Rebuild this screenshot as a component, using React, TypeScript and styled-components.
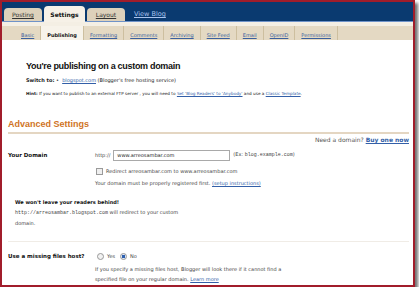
import styled, { createGlobalStyle } from "styled-components"

const GlobalStyle = createGlobalStyle`
  html, body {
    margin: 0;
    padding: 0;
    background: #ffffff;
  }
  body {
    font-family: "DejaVu Sans", Verdana, sans-serif;
    color: #222222;
  }
`

const topTabs = [
  { name: 'Posting', active: false },
  { name: 'Settings', active: true },
  { name: 'Layout', active: false },
]

const subTabs = [
  'Basic', 'Publishing', 'Formatting', 'Comments', 'Archiving',
  'Site Feed', 'Email', 'OpenID', 'Permissions',
]

const App = () => {
  return (
    <>
      <GlobalStyle />
      <Frame>
        <Header>
          {topTabs.map((t) => (
            <TopTab key={t.name} $active={t.active}>{t.name}</TopTab>
          ))}
          <ViewBlog>View Blog</ViewBlog>
        </Header>
        <SubBar>
          {subTabs.map((s) => (
            <SubTab key={s} $active={s === 'Publishing'}>{s}</SubTab>
          ))}
        </SubBar>

        <Intro>
          <Title>You're publishing on a custom domain</Title>
          <SwitchLine>
            <b>Switch to:</b> &bull;&nbsp; <Link>blogspot.com</Link> (Blogger's free hosting service)
          </SwitchLine>
          <Hint>
            <b>Hint:</b> If you want to publish to an external FTP server , you will need to <Link>Set 'Blog Readers' to 'Anybody'</Link> and use a <Link>Classic Template</Link>.
          </Hint>
        </Intro>

        <Section>
          <SectionTitle>Advanced Settings</SectionTitle>
          <NeedDomain>
            Need a domain? <BoldLink>Buy one now</BoldLink>
          </NeedDomain>

          <FormRow>
            <Label>Your Domain</Label>
            <Controls>
              <InputLine>
                <span>http://</span>
                <TextBox>www.arreosambar.com</TextBox>
                <span>(Ex: <Mono>blog.example.com</Mono>)</span>
              </InputLine>
              <CheckLine>
                <CheckBox />
                <span>Redirect arreosambar.com to www.arreosambar.com</span>
              </CheckLine>
              <Note>
                Your domain must be properly registered first. <Link>(setup instructions)</Link>
              </Note>
            </Controls>
          </FormRow>

          <Behind>
            <BehindTitle>We won't leave your readers behind!</BehindTitle>
            <BehindText>
              <Mono>http://arreosambar.blogspot.com</Mono> will redirect to your custom domain.
            </BehindText>
          </Behind>

          <Divider />

          <FormRow>
            <Label>Use a missing files host?</Label>
            <Controls>
              <RadioLine>
                <Radio />
                <span>Yes</span>
                <Radio $checked />
                <span>No</span>
              </RadioLine>
              <Help>
                If you specify a missing files host, Blogger will look there if it cannot find a specified file on your regular domain. <Link>Learn more</Link>
              </Help>
            </Controls>
          </FormRow>
        </Section>
      </Frame>
    </>
  )
}

export default App

const Frame = styled.div`
width: 411px;
height: 283px;
border: 2px solid #a11d2b;
box-shadow: 3px 3px 3px rgba(0, 0, 0, 0.55);
overflow: hidden;
display: flex;
flex-direction: column;
background: #ffffff;
`

const Header = styled.div`
height: 19px;
background: #0a3a70;
border-bottom: 1px solid #6f93c8;
display: flex;
align-items: flex-end;
padding-left: 2px;
gap: 2px;
`

const TopTab = styled.div<{ $active?: boolean }>`
height: ${p => p.$active ? '16px' : '13px'};
width: ${p => p.$active ? '41px' : '38px'};
background: ${p => p.$active ? '#f6f1e7' : '#ddd1bb'};
border-radius: 4px 4px 0 0;
font-size: 6px;
font-weight: ${p => p.$active ? 'bold' : 'normal'};
color: ${p => p.$active ? '#111111' : '#333333'};
text-decoration: ${p => p.$active ? 'none' : 'underline'};
display: flex;
align-items: center;
justify-content: center;
margin-bottom: ${p => p.$active ? '-1px' : '0'};
`

const ViewBlog = styled.div`
font-size: 6.5px;
color: #a9c4ee;
text-decoration: underline;
margin-left: 7px;
align-self: center;
padding-top: 5px;
`

const SubBar = styled.div`
height: 18px;
background: linear-gradient(#f4efe4 0, #f4efe4 4px, #e4d9c3 4px);
display: flex;
align-items: stretch;
padding-left: 13px;
`

const SubTab = styled.div<{ $active?: boolean }>`
display: flex;
align-items: center;
padding: 4px 6px 0;
margin-top: 4px;
font-size: 5px;
font-weight: ${p => p.$active ? 'bold' : 'normal'};
color: ${p => p.$active ? '#111111' : '#3a5f9e'};
text-decoration: ${p => p.$active ? 'none' : 'underline'};
background: ${p => p.$active ? '#f7f3ea' : 'transparent'};
border-right: 1px solid #cdbf9f;
`

const Intro = styled.div`
padding: 20px 0 0 24px;
display: flex;
flex-direction: column;
`

const Title = styled.div`
font-family: "Liberation Sans", Arial, sans-serif;
font-weight: bold;
font-size: 9px;
letter-spacing: -0.3px;
color: #111111;
line-height: 12px;
`

const SwitchLine = styled.div`
margin-top: 3px;
font-size: 5px;
line-height: 10px;
`

const Hint = styled.div`
margin-top: 5px;
font-size: 4.2px;
line-height: 8px;
`

const Link = styled.span`
color: #335fa8;
text-decoration: underline;
`

const BoldLink = styled(Link)`
font-weight: bold;
`

const Mono = styled.span`
font-family: "Liberation Mono", "Courier New", monospace;
line-height: 10px;
`

const Section = styled.div`
padding: 20px 4px 0 6px;
display: flex;
flex-direction: column;
`

const SectionTitle = styled.div`
font-family: "Liberation Sans", Arial, sans-serif;
font-weight: bold;
font-size: 9px;
color: #d0741f;
line-height: 12px;
padding-bottom: 2px;
border-bottom: 2px solid #e4d6c2;
`

const NeedDomain = styled.div`
align-self: flex-end;
font-size: 6px;
line-height: 10px;
color: #555555;
margin-top: 1px;
`

const FormRow = styled.div`
display: flex;
margin-top: 4px;
`

const Label = styled.div`
width: 87px;
flex-shrink: 0;
font-weight: bold;
font-size: 5.5px;
line-height: 12px;
color: #111111;
`

const Controls = styled.div`
display: flex;
flex-direction: column;
font-size: 5px;
color: #444444;
`

const InputLine = styled.div`
display: flex;
align-items: center;
gap: 3px;
height: 12px;
`

const TextBox = styled.div`
width: 117px;
height: 11px;
border: 1px solid #a9a9a9;
box-sizing: border-box;
padding-left: 3px;
display: flex;
align-items: center;
font-size: 5px;
color: #222222;
`

const CheckLine = styled.div`
display: flex;
align-items: center;
gap: 3px;
margin-top: 6px;
line-height: 8px;
`

const CheckBox = styled.div`
width: 5px;
height: 5px;
border: 1px solid #9a9a9a;
background: #efefef;
margin-left: 1px;
`

const Note = styled.div`
margin-top: 4px;
line-height: 8px;
`

const Behind = styled.div`
padding-left: 7px;
margin-top: 10px;
font-size: 5px;
color: #111111;
display: flex;
flex-direction: column;
`

const BehindTitle = styled.div`
font-weight: bold;
line-height: 10px;
`

const BehindText = styled.div`
width: 185px;
line-height: 10px;
color: #444444;
`

const Divider = styled.div`
height: 1px;
background: #f0ece6;
margin: 13px 0 4px;
`

const RadioLine = styled.div`
display: flex;
align-items: center;
gap: 3px;
height: 12px;
`

const Radio = styled.div<{ $checked?: boolean }>`
width: 5px;
height: 5px;
border-radius: 50%;
border: 1px solid #999999;
background: ${p => p.$checked ? 'radial-gradient(circle, #2d5fae 0 1.5px, #dfe8f5 2px)' : '#f2f2f2'};
margin-left: 2px;
`

const Help = styled.div`
width: 210px;
line-height: 10px;
margin-top: 2px;
`
